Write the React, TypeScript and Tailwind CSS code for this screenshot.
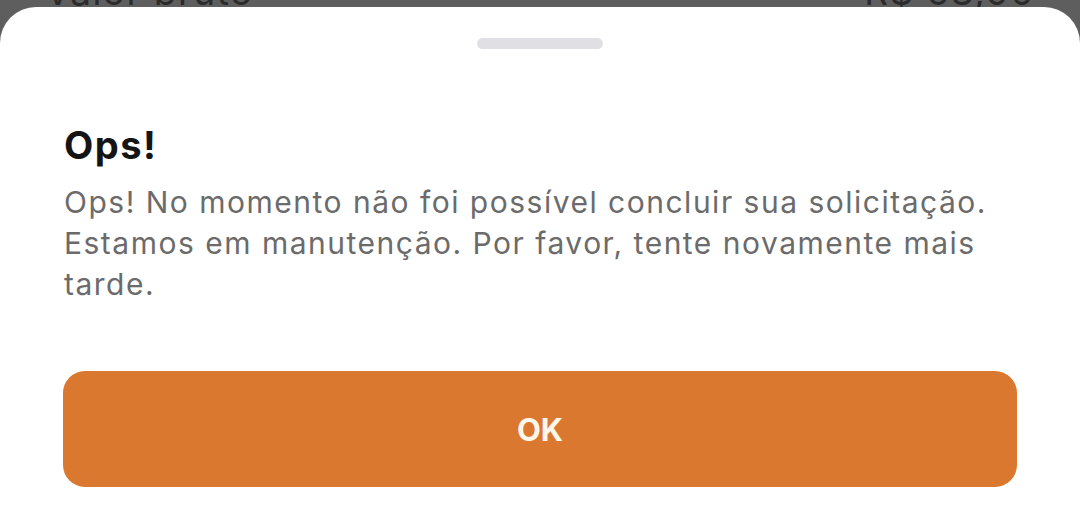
export default function App() {
  return (
    <div
      className="flex h-[532px] w-full flex-col overflow-hidden bg-[#5e5e5e]"
      style={{ fontFamily: "Inter, 'Noto Sans', sans-serif" }}
    >
      <div className="flex h-[7px] shrink-0 items-end justify-between px-[45px] text-[37px] leading-none tracking-[0.04em] text-[#2b2b2b]">
        <span className="-mb-[3px]">Valor bruto</span>
        <span className="-mb-[3px]">R$ 53,00</span>
      </div>

      <div className="relative flex flex-1 flex-col rounded-t-[36px] bg-white px-[64px]">
        <div className="mx-auto mt-[31px] h-[11px] w-[126px] rounded-full bg-[#dfdfe4]" />

        <h1 className="mt-[74px] text-[38px] font-bold leading-[44px] tracking-[0.04em] text-[#151515]">Ops!</h1>

        <p className="mt-[15px] text-[30px] leading-[41px] tracking-[0.05em] text-[#6b6b6b]">
          Ops! No momento não foi possível concluir sua solicitação.
          <br />
          Estamos em manutenção. Por favor, tente novamente mais
          <br />
          tarde.
        </p>

        <button className="mt-[66px] -ml-px flex h-[116px] w-[954px] items-center justify-center rounded-[22px] bg-[#db7830] pt-[2px] text-[31px] font-bold text-[#fff8ea]">
          OK
        </button>
      </div>
    </div>
  );
}
